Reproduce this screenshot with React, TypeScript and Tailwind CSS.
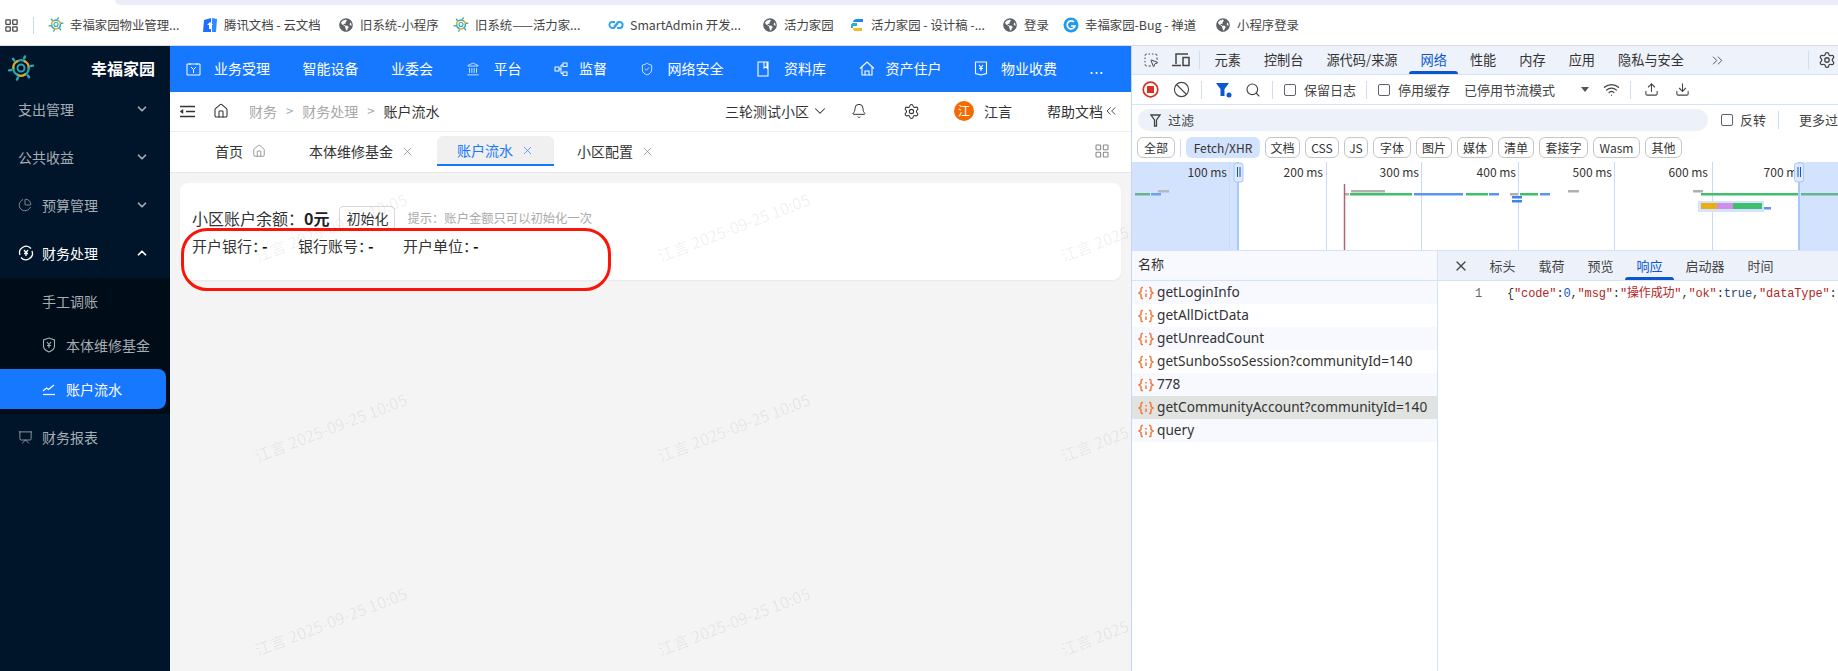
import {
  Ban,
  Bell,
  ChevronDown,
  ChevronUp,
  ChevronsLeft,
  ChevronsRight,
  Download,
  House,
  Landmark,
  LayoutGrid,
  ChartPie,
  Presentation,
  Search,
  Settings,
  ShieldCheck,
  SquareDashedMousePointer,
  Upload,
  Wifi,
  X,
} from "lucide-react";
import { FaGlobeAmericas } from "react-icons/fa";
import type { ReactNode } from "react";

function FlowerLogo({ size }: { size: number }) {
  const petals = [0, 60, 120, 180, 240, 300];
  return (
    <svg width={size} height={size} viewBox="0 0 32 32" fill="none" strokeLinecap="round">
      <circle cx="16" cy="16" r="4" stroke="#2aa5b5" strokeWidth="2.200" />
      {petals.map((deg, i) => (
        <g key={deg} transform={`rotate(${deg} 16 16)`}>
          <path d="M11.500 8.500Q16 5.500 20.500 8.500" stroke={i % 2 === 1 ? "#d9a62e" : "#25a9b0"} strokeWidth="2.600" />
          <path d="M20.500 2.800L19.500 5.200" stroke="#25a9b0" strokeWidth="2.800" />
        </g>
      ))}
    </svg>
  );
}

function Globe() {
  return <FaGlobeAmericas size={14} className="text-[#5f6368]" />;
}

function TencentDocs() {
  return (
    <svg width="16" height="16" viewBox="0 0 16 16">
      <path d="M2 3l7-2v14H1z" fill="#1f6fff" />
      <path d="M10 1l5 1-1 13h-4z" fill="#2a8cff" />
      <path d="M5 8l3-3 3 3H9v4H7V8z" fill="#fff" />
    </svg>
  );
}

function ChainIcon() {
  return (
    <svg width="16" height="16" viewBox="0 0 16 16" fill="none" stroke="#35a7e8" strokeWidth="2">
      <path d="M7 5H5a3 3 0 0 0-1 6h2l4-5" />
      <path d="M9 11h2a3 3 0 0 0 1-6h-2l-4 5" />
    </svg>
  );
}

function DesignIcon() {
  return (
    <svg width="16" height="16" viewBox="0 0 16 16">
      <path d="M4 5c0-2 2-3 4-3h6v3H7z" fill="#1e88f0" />
      <path d="M2 8c0-1 1-2 2-2h4v3H4v2H2z" fill="#25b0d8" />
      <path d="M4 11h9v3H6c-1 0-2-1-2-3z" fill="#f5b82e" />
    </svg>
  );
}

function ZentaoIcon() {
  return (
    <svg width="16" height="16" viewBox="0 0 16 16" fill="none">
      <circle cx="8" cy="8" r="7.500" fill="#1f9bef" />
      <path d="M11 5a4 4 0 1 0 1 4H8" stroke="#fff" strokeWidth="1.700" />
    </svg>
  );
}

const bookmarks: { w: string; icon: ReactNode; label: string }[] = [
  { w: "w-[154px]", icon: <FlowerLogo size={17} />, label: "幸福家园物业管理..." },
  { w: "w-[136px]", icon: <TencentDocs />, label: "腾讯文档 - 云文档" },
  { w: "w-[115px]", icon: <Globe />, label: "旧系统-小程序" },
  { w: "w-[155px]", icon: <FlowerLogo size={17} />, label: "旧系统——活力家..." },
  { w: "w-[154px]", icon: <ChainIcon />, label: "SmartAdmin 开发..." },
  { w: "w-[87px]", icon: <Globe />, label: "活力家园" },
  { w: "w-[153px]", icon: <DesignIcon />, label: "活力家园 - 设计稿 -..." },
  { w: "w-[61px]", icon: <Globe />, label: "登录" },
  { w: "w-[152px]", icon: <ZentaoIcon />, label: "幸福家园-Bug - 禅道" },
  { w: "w-[85px]", icon: <Globe />, label: "小程序登录" },
];

function BookmarkBar() {
  return (
    <div className="h-[46px] shrink-0 border-b border-[#dadce0] bg-white">
      <div className="ml-[115px] h-[5px] rounded-bl-xl bg-[#e9eef6]" />
      <div className="flex h-[40px] items-center pl-[4px]">
        <LayoutGrid size={15} strokeWidth={2} className="text-[#444]" />
        <div className="ml-[14px] mr-[14px] h-[17px] w-px bg-[#c7d7f5]" />
        {bookmarks.map((b) => (
          <div key={b.label} className={`${b.w} flex shrink-0 items-center gap-[6px] text-[12.4px] text-[#444]`}>
            <span className="flex w-[16px] justify-center">{b.icon}</span>
            <span className="whitespace-nowrap">{b.label}</span>
          </div>
        ))}
      </div>
    </div>
  );
}

function YuanShield() {
  return (
    <svg width="14" height="16" viewBox="0 0 14 16" fill="none" stroke="currentColor" strokeWidth="1.100">
      <path d="M7 1l5.500 2v6c0 3-3 5-5.500 6-2.500-1-5.500-3-5.500-6V3z" />
      <path d="M5 5l2 2.500L9 5M7 7.500V11M5 8.500h4" />
    </svg>
  );
}

function FinanceIcon() {
  return (
    <svg width="16" height="16" viewBox="0 0 16 16" fill="none" stroke="currentColor" strokeWidth="1.300">
      <path d="M2 10a6.500 6.500 0 0 1 11-6.500" />
      <path d="M14 6a6.500 6.500 0 0 1-11 6.500" />
      <path d="M6 5l2 2.500L10 5M8 7.500V11M6 8.500h4" />
    </svg>
  );
}

function TrendIcon() {
  return (
    <svg width="14" height="14" viewBox="0 0 14 14" fill="none" stroke="currentColor" strokeWidth="1.200">
      <path d="M1 9l3.500-3 2 1.500L12 3" />
      <path d="M1 12.500h12" />
    </svg>
  );
}

function MenuRow({ label, icon, open }: { label: string; icon?: ReactNode; open?: boolean }) {
  return (
    <div className={`flex h-[40px] items-center pl-[18px] text-[14px] ${open ? "text-white" : "text-[#a6adb4]"}`}>
      {icon ? <span className="flex w-[24px] items-center">{icon}</span> : null}
      <span>{label}</span>
      {open === undefined ? null : (
        <span className="ml-auto mr-[21px]">
          {open ? <ChevronUp size={14} strokeWidth={3} /> : <ChevronDown size={14} strokeWidth={3} />}
        </span>
      )}
    </div>
  );
}

function Sidebar() {
  return (
    <aside className="flex w-[170px] shrink-0 flex-col bg-[#00152a]">
      <div className="flex h-[43px] items-center pl-[7px] pt-[1px]">
        <FlowerLogo size={28} />
        <span className="ml-[56px] text-[16px] font-bold text-white">幸福家园</span>
      </div>
      <div className="flex flex-col gap-[8px]">
        <MenuRow label="支出管理" open={false} />
        <MenuRow label="公共收益" open={false} />
        <MenuRow label="预算管理" open={false} icon={<ChartPie size={14} strokeWidth={1.300} />} />
        <MenuRow label="财务处理" open icon={<FinanceIcon />} />
      </div>
      <div className="mt-[5px] flex h-[136px] flex-col bg-[#000c17] pt-[3px] text-[14px] text-[#a6adb4]">
        <div className="flex h-[40px] items-center pl-[42px]">手工调账</div>
        <div className="mt-[4px] flex h-[40px] items-center gap-[10px] pl-[42px]">
          <YuanShield />
          <span>本体维修基金</span>
        </div>
        <div className="mt-[4px] mr-[4px] flex h-[40px] items-center gap-[10px] rounded-r-lg bg-[#1677ff] pl-[42px] text-white">
          <TrendIcon />
          <span>账户流水</span>
        </div>
      </div>
      <div className="mt-[3px]">
        <MenuRow label="财务报表" icon={<Presentation size={15} strokeWidth={1.300} />} />
      </div>
    </aside>
  );
}

function CalendarIcon() {
  return (
    <svg width="15" height="14" viewBox="0 0 15 14" fill="none" stroke="currentColor" strokeWidth="1">
      <path d="M1 2h13v11H1zM4 1v2M11 1v2" />
      <path d="M5 5l2.500 2.500L10 5M7.500 7.500V11" />
    </svg>
  );
}

function NodesIcon() {
  return (
    <svg width="14" height="14" viewBox="0 0 14 14" fill="none" stroke="currentColor" strokeWidth="1">
      <rect x="1" y="5" width="4" height="4" />
      <rect x="9" y="1" width="4" height="3.500" />
      <rect x="9" y="10" width="4" height="3.500" />
      <path d="M5 7h2V3h2M7 7v4.500h2" />
    </svg>
  );
}

function BookIcon() {
  return (
    <svg width="14" height="16" viewBox="0 0 14 16" fill="none" stroke="currentColor" strokeWidth="1.100">
      <path d="M2 1h10v14H2zM8 1v6l1.500-1L11 7V1" />
    </svg>
  );
}

function HouseIcon() {
  return (
    <svg width="16" height="15" viewBox="0 0 16 15" fill="none" stroke="currentColor" strokeWidth="1.100">
      <path d="M1 7.500L8 1l7 6.500M3 6v8h10V6M6 14v-4h4v4" />
    </svg>
  );
}

function FeeIcon() {
  return (
    <svg width="14" height="15" viewBox="0 0 14 15" fill="none" stroke="currentColor" strokeWidth="1.100">
      <path d="M1.500 1h11v11.500L7 14l-5.500-1.500z" />
      <path d="M5 4l2 2.500L9 4M7 6.500V10M5 7.500h4" />
    </svg>
  );
}

function TopNav() {
  return (
    <div className="flex h-[46px] shrink-0 items-center gap-[32.500px] bg-[#1677ff] pb-[1px] pl-[16px] text-[14px] text-white">
      <div className="flex items-center gap-[13px]">
        <CalendarIcon />
        <span>业务受理</span>
      </div>
      <span>智能设备</span>
      <span>业委会</span>
      <div className="flex items-center gap-[14px]">
        <Landmark size={14} strokeWidth={1.300} />
        <span>平台</span>
      </div>
      <div className="flex items-center gap-[11px]">
        <NodesIcon />
        <span>监督</span>
      </div>
      <div className="flex items-center gap-[14px]">
        <ShieldCheck size={14} strokeWidth={1.400} />
        <span>网络安全</span>
      </div>
      <div className="flex items-center gap-[14px]">
        <BookIcon />
        <span>资料库</span>
      </div>
      <div className="flex items-center gap-[11px]">
        <HouseIcon />
        <span>资产住户</span>
      </div>
      <div className="flex items-center gap-[13px]">
        <FeeIcon />
        <span>物业收费</span>
      </div>
      <span className="tracking-[1px]">...</span>
    </div>
  );
}

function OutdentIcon() {
  return (
    <svg width="15" height="13" viewBox="0 0 15 13" fill="none" stroke="currentColor" strokeWidth="1.600">
      <path d="M0 1.500h15M6 6.500h9M0 11.500h15" />
      <path d="M0 6.500l3-2v4z" fill="currentColor" strokeWidth="0.500" />
    </svg>
  );
}

function BreadcrumbBar() {
  return (
    <div className="flex h-[40px] shrink-0 items-center border-b border-[#efefef] bg-white pb-[1px] pl-[10px] pr-[12px] text-[14px] text-[#333]">
      <OutdentIcon />
      <House size={16} strokeWidth={1.600} className="ml-[18px]" />
      <div className="ml-[20px] flex items-center gap-[9px] text-[#a8a8a8]">
        <span>财务</span>
        <span className="text-[13px]">&gt;</span>
        <span>财务处理</span>
        <span className="text-[13px]">&gt;</span>
        <span className="text-[#333]">账户流水</span>
      </div>
      <div className="ml-auto flex items-center">
        <span>三轮测试小区</span>
        <ChevronDown size={18} strokeWidth={1.400} className="ml-[2px]" />
        <Bell size={16} strokeWidth={1.500} className="ml-[22px]" />
        <Settings size={17} strokeWidth={1.500} className="ml-[36px]" />
        <span className="ml-[34px] flex h-[20px] w-[20px] items-center justify-center rounded-full bg-[#f56a00] text-[12px] text-white">
          江
        </span>
        <span className="ml-[10px]">江言</span>
        <span className="ml-[35px]">帮助文档</span>
        <ChevronsLeft size={16} strokeWidth={1.300} />
      </div>
    </div>
  );
}

function TabStrip() {
  return (
    <div className="flex h-[41px] shrink-0 items-start border-b border-[#e8e8e8] bg-white pl-[45px] pr-[21px] pt-[4px] text-[14px] text-[#333]">
      <div className="flex h-[30px] items-center gap-[9px]">
        <span>首页</span>
        <House size={14} strokeWidth={1.100} className="text-[#666]" />
      </div>
      <div className="ml-[43px] flex h-[30px] items-center gap-[8px]">
        <span>本体维修基金</span>
        <X size={13} strokeWidth={1.200} className="text-[#777]" />
      </div>
      <div className="ml-[23px] flex h-[30px] items-center gap-[8px] rounded-t-md border-b-2 border-[#1677ff] bg-[#f0f0f0] px-[20px] text-[#1677ff]">
        <span>账户流水</span>
        <X size={13} strokeWidth={1.200} />
      </div>
      <div className="ml-[23px] flex h-[30px] items-center gap-[8px]">
        <span>小区配置</span>
        <X size={13} strokeWidth={1.200} className="text-[#777]" />
      </div>
      <LayoutGrid size={16} strokeWidth={1.600} className="ml-auto mt-[7px] text-[#888]" />
    </div>
  );
}

function Field({ label, w }: { label: string; w: string }) {
  return (
    <>
      <span className="w-[70px] whitespace-nowrap">
        {label}
        <span className="tracking-[-5px]">：</span>
      </span>
      <b className={`${w} text-[#111]`}>-</b>
    </>
  );
}

function AccountCard() {
  return (
    <div className="relative mx-[10px] mt-[10px] h-[97px] rounded-lg bg-white pl-[12px] pt-[23px] text-[#333] shadow-[0_1px_2px_rgba(0,0,0,0.05)]">
      <div className="flex h-[24px] items-center whitespace-nowrap">
        <span className="text-[16px]">小区账户余额：</span>
        <span className="text-[16px] font-bold text-[#222]">0元</span>
        <span className="ml-[10px] flex h-[24px] w-[56px] items-center justify-center rounded border border-[#d9d9d9] text-[14px]">
          初始化
        </span>
        <span className="ml-[12px] text-[12.300px] text-[#aaa]">提示：账户金额只可以初始化一次</span>
      </div>
      <div className="mt-[5px] flex h-[22px] items-center text-[15px]">
        <Field label="开户银行" w="w-[36px]" />
        <Field label="银行账号" w="w-[35px]" />
        <Field label="开户单位" w="" />
      </div>
      {/* annotation ring from the screenshot */}
      <div className="absolute left-[1px] top-[45px] h-[63px] w-[430px] rounded-[26px] border-[3px] border-[#fb1408]" />
    </div>
  );
}

const marks = [
  "left-[80px] top-[169px]",
  "left-[483px] top-[169px]",
  "left-[886px] top-[169px]",
  "left-[80px] top-[369px]",
  "left-[483px] top-[369px]",
  "left-[886px] top-[369px]",
  "left-[80px] top-[563px]",
  "left-[483px] top-[563px]",
  "left-[886px] top-[563px]",
];

function Watermarks() {
  return (
    <>
      {marks.map((pos) => (
        <span
          key={pos}
          className={`pointer-events-none absolute ${pos} -rotate-[21deg] whitespace-nowrap text-[16px] text-black/[0.07]`}
        >
          江言 2025-09-25 10:05
        </span>
      ))}
    </>
  );
}

function RecordIcon() {
  return (
    <svg width="17" height="17" viewBox="0 0 17 17" fill="none">
      <circle cx="8.500" cy="8.500" r="7.300" stroke="#d93025" strokeWidth="1.700" />
      <rect x="5" y="5" width="7" height="7" rx="0.500" fill="#d93025" />
    </svg>
  );
}

function FunnelActive() {
  return (
    <svg width="16" height="16" viewBox="0 0 16 16" className="block">
      <path d="M0 1h13L8.500 7v7h-4V7z" fill="#0b57d0" />
      <circle cx="13" cy="13" r="2.500" fill="#0b57d0" />
    </svg>
  );
}

function FunnelOutline() {
  return (
    <svg width="11" height="13" viewBox="0 0 11 13" fill="none" stroke="#444" strokeWidth="1.300">
      <path d="M1 1h9L6.500 6v6h-2V6z" />
    </svg>
  );
}

function DeviceIcon() {
  return (
    <svg width="18" height="16" viewBox="0 0 18 16" fill="none" stroke="#444" strokeWidth="1.500" className="ml-[13px] shrink-0">
      <path d="M4 12V2h12" />
      <path d="M0 13.500h9" />
      <rect x="11" y="5.500" width="6" height="8" />
    </svg>
  );
}

function CheckBox({ cls }: { cls: string }) {
  return <span className={`block h-[12px] w-[12px] shrink-0 rounded-[2px] border border-[#5f6368] ${cls}`} />;
}

function VLine({ cls }: { cls: string }) {
  return <span className={`block h-[18px] w-px shrink-0 bg-[#cfdcf3] ${cls}`} />;
}

const mainTabs = ["元素", "控制台", "源代码/来源", "网络", "性能", "内存", "应用", "隐私与安全"];

const chips = [
  { w: "w-[74px]", t: "Fetch/XHR" },
  { w: "w-[35px]", t: "文档" },
  { w: "w-[34px]", t: "CSS" },
  { w: "w-[24px]", t: "JS" },
  { w: "w-[38px]", t: "字体" },
  { w: "w-[36px]", t: "图片" },
  { w: "w-[36px]", t: "媒体" },
  { w: "w-[36px]", t: "清单" },
  { w: "w-[49px]", t: "套接字" },
  { w: "w-[47px]", t: "Wasm" },
  { w: "w-[37px]", t: "其他" },
];

const bars = [
  { x: 1134, w: 15, y: 193, c: "#66b58f" },
  { x: 1150, w: 10, y: 193, c: "#6f9ff0" },
  { x: 1157, w: 11, y: 190, c: "#b4b7bb" },
  { x: 1350, w: 34, y: 190, c: "#b0b0b0" },
  { x: 1344, w: 4, y: 193, c: "#b0b0b0" },
  { x: 1349, w: 62, y: 193, c: "#3fbf6b" },
  { x: 1413, w: 49, y: 193, c: "#5b93f5" },
  { x: 1465, w: 22, y: 193, c: "#3fbf6b" },
  { x: 1488, w: 10, y: 193, c: "#5b93f5" },
  { x: 1509, w: 8, y: 193, c: "#b0b0b0" },
  { x: 1519, w: 18, y: 193, c: "#3fbf6b" },
  { x: 1539, w: 10, y: 193, c: "#5b93f5" },
  { x: 1511, w: 10, y: 196, c: "#3f83f0" },
  { x: 1511, w: 10, y: 200, c: "#3f83f0" },
  { x: 1567, w: 11, y: 190, c: "#b0b0b0" },
  { x: 1692, w: 10, y: 190, c: "#b0b0b0" },
  { x: 1700, w: 98, y: 193, c: "#3fbf6b" },
  { x: 1800, w: 38, y: 193, c: "#66b58f" },
  { x: 1763, w: 7, y: 207, c: "#5b93f5" },
];

const grid = [1228, 1325, 1420, 1517, 1613, 1711];

const labels = [
  { x: 1226, t: "100 ms" },
  { x: 1322, t: "200 ms" },
  { x: 1418, t: "300 ms" },
  { x: 1515, t: "400 ms" },
  { x: 1611, t: "500 ms" },
  { x: 1707, t: "600 ms" },
  { x: 1802, t: "700 ms" },
];

function Overview() {
  return (
    <svg viewBox="1131 162 707 88" className="block h-[88px] w-[707px] shrink-0 bg-white">
      <rect x="1131" y="162" width="106" height="88" fill="#d3e3fd" />
      <rect x="1798" y="162" width="40" height="88" fill="#d3e3fd" />
      {grid.map((x) => (
        <line key={x} x1={x + 0.5} x2={x + 0.5} y1="162" y2="250" stroke="#c9daf8" />
      ))}
      {labels.map((l) => (
        <text key={l.t} x={l.x} y="177" textAnchor="end" fontSize="12" fill="#333">
          {l.t}
        </text>
      ))}
      {bars.map((b) => (
        <rect key={`${b.x}-${b.y}`} x={b.x} y={b.y} width={b.w} height="2.500" fill={b.c} />
      ))}
      <line x1="1343.500" x2="1343.500" y1="184" y2="250" stroke="#b5616d" strokeWidth="1.500" />
      <rect x="1697" y="201" width="66" height="11" fill="#d3e3fd" />
      <rect x="1700" y="203" width="16" height="6" fill="#e8ae14" />
      <rect x="1716" y="203" width="16" height="6" fill="#d08ee8" />
      <rect x="1732" y="203" width="29" height="6" fill="#3fbf6b" />
      <rect x="1236" y="162" width="2" height="88" fill="#a8c7fa" />
      <rect x="1797" y="162" width="2" height="88" fill="#a8c7fa" />
      <rect x="1233" y="163" width="9" height="19" rx="2.500" fill="#dfe9fb" stroke="#a8c7fa" />
      <rect x="1793.500" y="163" width="9" height="19" rx="2.500" fill="#dfe9fb" stroke="#a8c7fa" />
      <path d="M1236.500 167v10M1239 167v10M1797 167v10M1799.500 167v10" stroke="#0b57d0" />
    </svg>
  );
}

function JsonIcon() {
  return (
    <svg width="16" height="14" viewBox="0 0 16 14" fill="none" stroke="#ee7b3c" strokeWidth="1.500" className="shrink-0">
      <path d="M5 1.500H4C3 1.500 3 2.500 3 3.500v2L1 7l2 1.500v2c0 1 0 2 1 2h1" />
      <path d="M11 1.500h1c1 0 1 1 1 2v2L15 7l-2 1.500v2c0 1 0 2-1 2h-1" />
      <path d="M8 4v1.500M8 7.500V11" />
    </svg>
  );
}

const requests = [
  "getLoginInfo",
  "getAllDictData",
  "getUnreadCount",
  "getSunboSsoSession?communityId=140",
  "778",
  "getCommunityAccount?communityId=140",
  "query",
];

function DevTools() {
  return (
    <div className="flex min-w-0 flex-1 flex-col overflow-hidden border-l border-[#c5d6f3] bg-white text-[#333]">
      <div className="flex h-[29px] shrink-0 items-center border-b border-[#d3e3fd] bg-[#eef2fb] pl-[11px] text-[13.200px]">
        <SquareDashedMousePointer size={16} strokeWidth={1.500} className="shrink-0 text-[#444]" />
        <DeviceIcon />
        <VLine cls="ml-[9px]" />
        <div className="ml-[3px] flex h-full">
          {mainTabs.map((t) => (
            <span
              key={t}
              className={`relative flex h-full items-center whitespace-nowrap px-[11.500px] ${t === "网络" ? "text-[#0b57d0]" : ""}`}
            >
              {t}
              {t === "网络" ? (
                <span className="absolute bottom-0 left-0 right-0 h-[3px] rounded-t bg-[#0b57d0]" />
              ) : null}
            </span>
          ))}
        </div>
        <ChevronsRight size={17} strokeWidth={1.400} className="ml-[14px] shrink-0 text-[#555]" />
        <VLine cls="ml-[82px]" />
        <Settings size={18} strokeWidth={1.700} className="ml-[9px] shrink-0 text-[#444]" />
      </div>
      <div className="flex h-[30px] shrink-0 items-center whitespace-nowrap border-b border-[#d3e3fd] pl-[10px] text-[13px] text-[#444]">
        <RecordIcon />
        <Ban size={17} strokeWidth={1.600} className="ml-[14px] shrink-0" />
        <VLine cls="ml-[11px]" />
        <span className="ml-[14px]">
          <FunnelActive />
        </span>
        <Search size={16} strokeWidth={1.700} className="ml-[13px] shrink-0" />
        <VLine cls="ml-[11px]" />
        <CheckBox cls="ml-[11px]" />
        <span className="ml-[8px]">保留日志</span>
        <VLine cls="ml-[10px]" />
        <CheckBox cls="ml-[11px]" />
        <span className="ml-[8px]">停用缓存</span>
        <span className="ml-[14px]">已停用节流模式</span>
        <span className="ml-[26px] h-0 w-0 border-x-[4.500px] border-t-[5px] border-x-transparent border-t-[#555]" />
        <Wifi size={17} strokeWidth={1.700} className="ml-[14px] shrink-0" />
        <VLine cls="ml-[10px]" />
        <Upload size={15} strokeWidth={1.700} className="ml-[13px] shrink-0" />
        <Download size={15} strokeWidth={1.700} className="ml-[16px] shrink-0" />
      </div>
      <div className="flex h-[32px] shrink-0 items-center whitespace-nowrap pb-[2px] pl-[6px] text-[13px] text-[#444]">
        <div className="flex h-[22px] w-[570px] shrink-0 items-center rounded-full bg-[#edf2fa] pl-[12px]">
          <FunnelOutline />
          <span className="ml-[7px]">过滤</span>
        </div>
        <CheckBox cls="ml-[13px]" />
        <span className="ml-[7px]">反转</span>
        <VLine cls="ml-[12px]" />
        <span className="ml-[20px]">更多过滤条件</span>
      </div>
      <div className="flex h-[25px] shrink-0 items-start pl-[5px] text-[12px] text-[#333]">
        <span className="flex h-[21px] w-[38px] shrink-0 items-center justify-center rounded-md border border-[#c4c7c5]">全部</span>
        <VLine cls="mx-[5px] mt-[2px]" />
        <div className="flex gap-[5px]">
          {chips.map((c) => (
            <span
              key={c.t}
              className={`flex h-[21px] ${c.w} items-center justify-center rounded-md ${
                c.t === "Fetch/XHR" ? "bg-[#d3e3fd]" : "border border-[#c4c7c5]"
              }`}
            >
              {c.t}
            </span>
          ))}
        </div>
      </div>
      <Overview />
      <div className="flex min-h-0 flex-1 border-t border-[#d3e3fd]">
        <div className="flex w-[306px] shrink-0 flex-col border-r border-[#d3e3fd]">
          <div className="flex h-[30px] items-center border-b border-[#d3e3fd] bg-[#f8f9fe] pb-[3px] pl-[6px] text-[13px]">名称</div>
          {requests.map((r, i) => (
            <div
              key={r}
              className={`flex h-[23px] items-center gap-[3px] pl-[6px] font-['Noto_Sans',sans-serif] text-[13.650px] text-[#333] ${
                r.startsWith("getCommunity") ? "bg-[#e1e3e1]" : i % 2 === 0 ? "bg-[#f7f9fe]" : "bg-white"
              }`}
            >
              <JsonIcon />
              <span className="whitespace-nowrap">{r}</span>
            </div>
          ))}
        </div>
        <div className="flex min-w-0 flex-1 flex-col">
          <div className="relative flex h-[30px] shrink-0 items-center border-b border-[#d3e3fd] bg-[#edf2fa] pl-[15px] text-[13px] text-[#444]">
            <X size={16} strokeWidth={2} className="shrink-0 text-[#444]" />
            <div className="ml-[9px] flex h-full">
              {["标头", "载荷", "预览", "响应", "启动器", "时间"].map((t) => (
                <span
                  key={t}
                  className={`relative flex h-full items-center whitespace-nowrap px-[11.500px] ${t === "响应" ? "text-[#0b57d0]" : ""}`}
                >
                  {t}
                  {t === "响应" ? (
                    <span className="absolute bottom-0 left-0 right-0 h-[3px] rounded-t bg-[#0b57d0]" />
                  ) : null}
                </span>
              ))}
            </div>
          </div>
          <div className="flex whitespace-nowrap pt-[4px] font-['Liberation_Mono','Noto_Sans_CJK_SC',monospace] text-[12px] tracking-[-0.150px]">
            <span className="ml-[37px] w-[32px] text-[#666]">1</span>
            <span className="text-[#333]">
              {"{"}
              <span className="text-[#b3261e]">"code"</span>:<span className="text-[#0b57d0]">0</span>,
              <span className="text-[#b3261e]">"msg"</span>:<span className="text-[#b3261e]">"操作成功"</span>,
              <span className="text-[#b3261e]">"ok"</span>:<span className="text-[#1f4a80]">true</span>,
              <span className="text-[#b3261e]">"dataType"</span>:
            </span>
          </div>
        </div>
      </div>
    </div>
  );
}

export default function App() {
  return (
    <div className="flex h-[671px] w-[1838px] flex-col overflow-hidden bg-white font-['Noto_Sans_CJK_SC',sans-serif]">
      <BookmarkBar />
      <div className="flex min-h-0 flex-1">
        <Sidebar />
        <main className="relative flex w-[961px] shrink-0 flex-col overflow-hidden bg-[#f4f4f4]">
          <TopNav />
          <BreadcrumbBar />
          <TabStrip />
          <AccountCard />
          <Watermarks />
        </main>
        <DevTools />
      </div>
    </div>
  );
}
